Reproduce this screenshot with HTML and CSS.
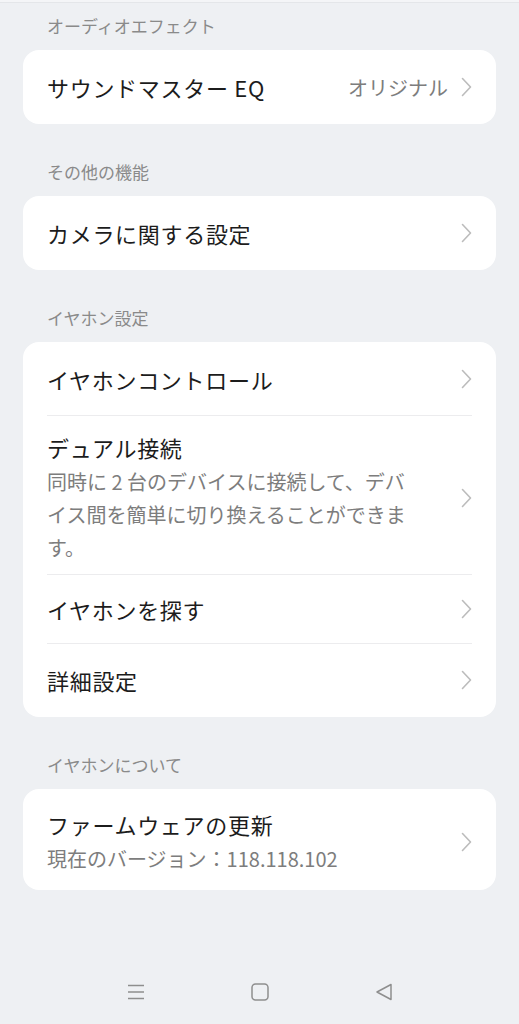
FILE: index.html
```html
<!DOCTYPE html>
<html lang="ja">
<head>
    <meta charset="UTF-8">
    <meta name="viewport" content="width=device-width, initial-scale=1.0">
    <title>イヤホン設定</title>
    <link rel="stylesheet" href="styles.css">
</head>
<body>
    <div class="top-edge"></div>

    <main class="settings">
        <section class="group">
            <h2 class="group-title">オーディオエフェクト</h2>
            <div class="card">
                <div class="row">
                    <div class="row-text">
                        <span class="row-title">サウンドマスター EQ</span>
                    </div>
                    <span class="row-value">オリジナル</span>
                    <svg class="chevron" viewBox="0 0 11 20"><path d="M1.5 1.5 L9.5 10 L1.5 18.5"/></svg>
                </div>
            </div>
        </section>

        <section class="group">
            <h2 class="group-title">その他の機能</h2>
            <div class="card">
                <div class="row">
                    <div class="row-text">
                        <span class="row-title">カメラに関する設定</span>
                    </div>
                    <svg class="chevron" viewBox="0 0 11 20"><path d="M1.5 1.5 L9.5 10 L1.5 18.5"/></svg>
                </div>
            </div>
        </section>

        <section class="group">
            <h2 class="group-title">イヤホン設定</h2>
            <div class="card">
                <div class="row">
                    <div class="row-text">
                        <span class="row-title">イヤホンコントロール</span>
                    </div>
                    <svg class="chevron" viewBox="0 0 11 20"><path d="M1.5 1.5 L9.5 10 L1.5 18.5"/></svg>
                </div>
                <div class="row row-tall">
                    <div class="row-text">
                        <span class="row-title">デュアル接続</span>
                        <span class="row-desc">同時に 2 台のデバイスに接続して、デバイス間を簡単に切り換えることができます。</span>
                    </div>
                    <svg class="chevron" viewBox="0 0 11 20"><path d="M1.5 1.5 L9.5 10 L1.5 18.5"/></svg>
                </div>
                <div class="row row-short">
                    <div class="row-text">
                        <span class="row-title">イヤホンを探す</span>
                    </div>
                    <svg class="chevron" viewBox="0 0 11 20"><path d="M1.5 1.5 L9.5 10 L1.5 18.5"/></svg>
                </div>
                <div class="row">
                    <div class="row-text">
                        <span class="row-title">詳細設定</span>
                    </div>
                    <svg class="chevron" viewBox="0 0 11 20"><path d="M1.5 1.5 L9.5 10 L1.5 18.5"/></svg>
                </div>
            </div>
        </section>

        <section class="group">
            <h2 class="group-title">イヤホンについて</h2>
            <div class="card">
                <div class="row row-firmware">
                    <div class="row-text">
                        <span class="row-title">ファームウェアの更新</span>
                        <span class="row-desc">現在のバージョン：118.118.102</span>
                    </div>
                    <svg class="chevron" viewBox="0 0 11 20"><path d="M1.5 1.5 L9.5 10 L1.5 18.5"/></svg>
                </div>
            </div>
        </section>
    </main>

    <nav class="navbar">
        <svg class="nav-icon" viewBox="0 0 18 18"><path d="M1 2.5 H17 M1 9 H17 M1 15.5 H17"/></svg>
        <svg class="nav-icon" viewBox="0 0 18 18"><rect x="1" y="1" width="16" height="16" rx="3.5"/></svg>
        <svg class="nav-icon" viewBox="0 0 18 18"><path d="M16 1.5 L2 9 L16 16.5 Z"/></svg>
    </nav>
</body>
</html>
```

FILE: styles.css
```css
:root {
    --page-bg: #eef0f3;
    --card-bg: #ffffff;
    --text-main: #1c1c1c;
    --text-sub: #7d7d7d;
    --text-group: #8a8a8a;
    --divider: #ececee;
    --chevron: #bcbcbc;
    --nav-icon: #8e8e8e;
}
* {
    box-sizing: border-box;
    margin: 0;
    padding: 0;
}
body {
    font-family: "Noto Sans CJK JP", "Noto Sans", sans-serif;
    background-color: var(--page-bg);
    color: var(--text-main);
    min-height: 100vh;
    display: flex;
    flex-direction: column;
}
.top-edge {
    height: 3px;
    background-color: #f4f5f7;
    border-bottom: 1px solid #e4e6e9;
}
.settings {
    padding: 0 23px;
}
.group-title {
    font-size: 17px;
    font-weight: normal;
    line-height: 24px;
    color: var(--text-group);
    padding-left: 24px;
    margin: 36px 0 12px;
}
.group:first-child .group-title {
    margin-top: 11px;
}
.card {
    background: var(--card-bg);
    border-radius: 16px;
    padding: 1px 0;
}
.row {
    display: flex;
    align-items: center;
    margin: 0 24px 0 24px;
    padding: 20px 0;
}
.row + .row {
    border-top: 1px solid var(--divider);
}
.row-tall {
    padding: 15px 0 10px;
}
.row-short {
    padding: 18px 0;
}
.row-firmware {
    padding: 18px 0 14px;
}
.row-text {
    flex: 1;
    display: flex;
    flex-direction: column;
}
.row-title {
    font-size: 22px;
    line-height: 32px;
    letter-spacing: 0.7px;
}
.row-desc {
    font-size: 20px;
    line-height: 33px;
    color: var(--text-sub);
    margin-top: 2px;
    max-width: 368px;
}
.row-value {
    font-size: 20px;
    color: var(--text-sub);
    margin-right: 13px;
}
.chevron {
    width: 11px;
    height: 20px;
    flex-shrink: 0;
}
.chevron path {
    fill: none;
    stroke: var(--chevron);
    stroke-width: 1.6;
    stroke-linecap: round;
    stroke-linejoin: round;
}
.navbar {
    margin-top: auto;
    height: 64px;
    display: flex;
    justify-content: center;
    align-items: center;
    gap: 106px;
}
.nav-icon {
    width: 18px;
    height: 18px;
}
.nav-icon path,
.nav-icon rect {
    fill: none;
    stroke: var(--nav-icon);
    stroke-width: 1.5;
    stroke-linejoin: round;
}
```
